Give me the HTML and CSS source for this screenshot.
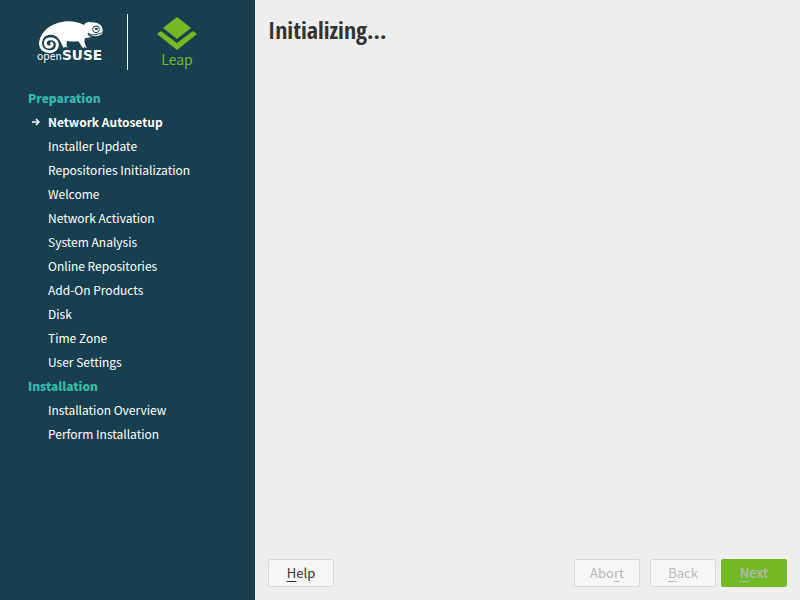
FILE: index.html
```
<!DOCTYPE html>
<html lang="en">
<head>
  <meta charset="UTF-8">
  <meta name="viewport" content="width=device-width, initial-scale=1.0">
  <title>openSUSE Leap Installation</title>
  <link rel="stylesheet" href="styles.css">
</head>
<body>

  <aside class="sidebar">
    <div class="brand">
      <svg class="brand-logo" viewBox="0 0 210 144" role="img" aria-label="openSUSE">
        <!-- body -->
        <path fill="#fff" d="M6 86C6 56 30 30 62 21C88 13 116 14 141 27C146 19 152 17 160 19C172 18 184 21 192 28C197 36 199 46 195 54C184 62 172 62 161 58L152 51C151 57 156 62 164 63L144 67C140 75 144 86 150 97L143 93L139 97C132 92 130 82 124 76C114 77 100 77 91 74C88 80 88 88 91 95L85 92L80 96C74 86 70 72 60 63C48 54 30 54 22 64C16 71 14 80 15 90Z"/>
        <!-- tail -->
        <path fill="none" stroke="#fff" stroke-width="9" stroke-linecap="round" d="M11 84C11 98 23 107 38 107C52 107 61 98 61 86C61 75 52 68 41 68C30 68 24 75 25 83C26 91 32 94 38 93C44 92 47 87 44 82"/>
        <!-- eye and mouth -->
        <circle cx="177" cy="40" r="10" fill="#fff" stroke="#173f4f" stroke-width="3"/>
        <ellipse cx="178" cy="39" rx="5" ry="3" fill="#173f4f"/>
        <path fill="none" stroke="#173f4f" stroke-width="3" d="M153 51C163 59 179 58 194 50"/>
        <text class="logo-open" x="0" y="132">open</text>
        <text class="logo-suse" x="75" y="132">SUSE</text>
        <circle cx="201" cy="131" r="1" fill="#fff"/>
      </svg>
      <div class="product">
        <svg class="product-icon" viewBox="0 0 40 34" aria-hidden="true">
          <path fill="#73ba25" d="M20 1L34 12L20 23L6 12Z"/>
          <path fill="#73ba25" d="M0 18L4 15L20 27L36 15L40 18L20 34Z"/>
        </svg>
        <span class="product-name">Leap</span>
      </div>
    </div>

    <nav class="steps">
      <h2>Preparation</h2>
      <ul>
        <li class="current" aria-current="step">
          <svg class="arrow" viewBox="0 0 8 8" aria-hidden="true"><path d="M0 4H7M4 1L7 4L4 7"/></svg>
          Network Autosetup
        </li>
        <li>Installer Update</li>
        <li>Repositories Initialization</li>
        <li>Welcome</li>
        <li>Network Activation</li>
        <li>System Analysis</li>
        <li>Online Repositories</li>
        <li>Add-On Products</li>
        <li>Disk</li>
        <li>Time Zone</li>
        <li>User Settings</li>
      </ul>
      <h2>Installation</h2>
      <ul>
        <li>Installation Overview</li>
        <li>Perform Installation</li>
      </ul>
    </nav>
  </aside>

  <main class="content">
    <h1>Initializing...</h1>
    <div class="buttons">
      <button type="button" class="help" accesskey="h"><u>H</u>elp</button>
      <button type="button" class="abort" accesskey="r" disabled>Abo<u>r</u>t</button>
      <button type="button" class="back" accesskey="b" disabled><u>B</u>ack</button>
      <button type="button" class="next" accesskey="n" disabled><u>N</u>ext</button>
    </div>
  </main>

</body>
</html>
```
FILE: styles.css
```
body {
  margin: 0;
  min-height: 100vh;
  display: flex;
  background-color: #eeeeee;
  font-family: "Noto Sans CJK SC", "Noto Sans", sans-serif;
  font-size: 12px;
  color: #333;
}

.sidebar {
  flex: 0 0 255px;
  box-sizing: border-box;
  padding-top: 14px;
  background-color: #173f4f;
  color: #fff;
}

.brand {
  display: flex;
  height: 56px;
  padding-left: 37px;
  margin-bottom: 16px;
}

.brand-logo {
  width: 70px;
  height: 48px;
  margin-top: 2px;
}

.logo-open,
.logo-suse {
  font-family: "Noto Sans CJK SC", sans-serif;
  fill: #fff;
}

.logo-open {
  font-size: 31px;
}

.logo-suse {
  font-family: "DejaVu Sans", sans-serif;
  font-size: 41px;
  font-weight: bold;
}

.product {
  display: flex;
  flex-direction: column;
  align-items: center;
  margin-left: 20px;
  padding-left: 29px;
  border-left: 1px solid #fff;
}

.product-icon {
  width: 40px;
  height: 34px;
  margin-top: 2px;
}

.product-name {
  font-size: 14px;
  line-height: 18px;
  color: #73ba25;
}

.steps h2 {
  margin: 0;
  padding-left: 28px;
  font-size: 12px;
  font-weight: 900;
  line-height: 24px;
  color: #35b9ab;
}

.steps ul {
  list-style-type: none;
  margin: 0;
  padding: 0;
}

.steps li {
  padding-left: 48px;
  line-height: 24px;
}

.steps .current {
  display: flex;
  align-items: center;
  gap: 8px;
  padding-left: 32px;
  font-weight: bold;
}

.arrow {
  width: 8px;
  height: 8px;
  fill: none;
  stroke: #fff;
  stroke-width: 1.5;
}

.content {
  flex: 1;
  display: flex;
  flex-direction: column;
  justify-content: space-between;
  padding: 13px;
}

h1 {
  margin: 0;
  font-family: "Open Sans Condensed", "Liberation Sans Narrow", "Open Sans", sans-serif;
  font-size: 24px;
  line-height: 34px;
}

.buttons {
  display: flex;
}

button {
  width: 66px;
  height: 28px;
  padding: 0 0 2px;
  border: 1px solid #d8d8d8;
  border-radius: 2px;
  background-color: #f6f6f6;
  color: #333;
  font-family: inherit;
  font-size: 13px;
}

button:disabled {
  color: #b9b9b9;
}

button u {
  text-underline-offset: 3px;
}

.abort {
  margin-left: auto;
}

.back {
  margin-left: 10px;
}

.next {
  margin-left: 5px;
  border-color: #73ba25;
  background-color: #73ba25;
  font-weight: 500;
}
```
